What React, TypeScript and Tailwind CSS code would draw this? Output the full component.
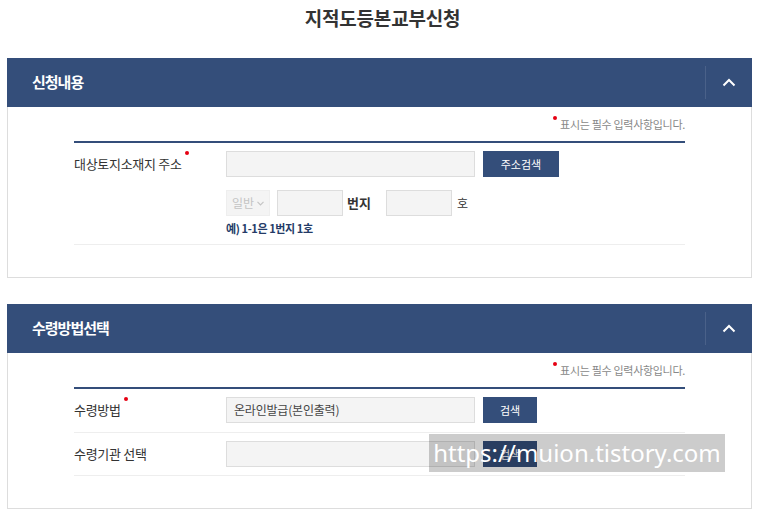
import React from "react";

const FONT = '"Noto Sans CJK KR", "Noto Sans", sans-serif';

function Chevron() {
  return (
    <svg width="14" height="9" viewBox="0 0 14 9" fill="none">
      <polyline points="1.5,7.5 7,2 12.5,7.5" stroke="#ffffff" strokeWidth="2" fill="none" />
    </svg>
  );
}

function Header({ title }: { title: string }) {
  return (
    <div className="flex h-[49px] items-center bg-[#344e7a]">
      <div className="flex-1 pl-[25px] text-[15px] font-bold tracking-[-1px] text-white">{title}</div>
      <div className="h-[33px] w-px bg-[#4a6189]" />
      <div className="flex w-[46px] items-center justify-center">
        <Chevron />
      </div>
    </div>
  );
}

function Note() {
  return (
    <div className="flex justify-end pt-[9px] pb-[9px] text-[11px] leading-[16px] tracking-[-0.3px] text-[#888]">
      <span className="relative">
        <span className="absolute -left-[7px] top-[0px] h-[4px] w-[4px] rounded-full bg-[#e60012]" />
        표시는 필수 입력사항입니다.
      </span>
    </div>
  );
}

function Label({ text, req }: { text: string; req?: boolean }) {
  return (
    <div className="w-[152px] shrink-0 text-[13px] tracking-[-0.3px] text-[#333]">
      <span className="relative">
        {text}
        {req && <span className="absolute -right-[7px] -top-[3px] h-[4px] w-[4px] rounded-full bg-[#e60012]" />}
      </span>
    </div>
  );
}

function Btn({ text, w }: { text: string; w: string }) {
  return (
    <div className={`flex h-[26px] items-center justify-center bg-[#344e7a] text-[11px] text-white ${w}`}>{text}</div>
  );
}

export default function App() {
  return (
    <div className="relative h-[513px] w-[765px] overflow-hidden bg-white" style={{ fontFamily: FONT }}>
      <div className="h-[58px] pt-[4px] text-center text-[19px] font-bold leading-[28px] tracking-[-0.2px] text-[#333]">
        지적도등본교부신청
      </div>

      {/* Section 1 */}
      <div className="ml-[7px] w-[745px]">
        <Header title="신청내용" />
        <div className="h-[171px] border border-t-0 border-[#dddddd] px-[66px]">
          <Note />
          <div className="border-t-2 border-[#344e7a]" />
          <div className="border-b border-[#eeeeee] pt-[8px] pb-[8px]">
            <div className="flex items-center">
              <Label text="대상토지소재지 주소" req />
              <div className="h-[26px] w-[249px] border border-[#dddddd] bg-[#f4f4f4]" />
              <div className="ml-[8px]">
                <Btn text="주소검색" w="w-[76px]" />
              </div>
            </div>
            <div className="mt-[13px] flex items-center pl-[152px]">
              <div className="flex h-[26px] w-[44px] items-center justify-center gap-[3px] border border-[#eeeeee] bg-[#f4f4f4] text-[12px] text-[#c4c4c4]">
                일반
                <svg width="7" height="5" viewBox="0 0 7 5" fill="none">
                  <polyline points="0.5,0.8 3.5,3.8 6.5,0.8" stroke="#c4c4c4" strokeWidth="1.2" />
                </svg>
              </div>
              <div className="ml-[7px] h-[26px] w-[66px] border border-[#dddddd] bg-[#f4f4f4]" />
              <div className="ml-[4px] w-[39px] text-[13px] font-semibold text-[#333]">번지</div>
              <div className="h-[26px] w-[66px] border border-[#dddddd] bg-[#f4f4f4]" />
              <div className="ml-[5px] text-[12px] text-[#333]">호</div>
            </div>
            <div className="mt-[4px] pl-[152px] text-[11px] font-bold leading-[16px] tracking-[-0.4px] text-[#243b67]">
              예) 1-1은 1번지 1호
            </div>
          </div>
        </div>
      </div>

      {/* Section 2 */}
      <div className="ml-[7px] mt-[26px] w-[745px]">
        <Header title="수령방법선택" />
        <div className="h-[156px] border border-t-0 border-[#dddddd] px-[66px]">
          <Note />
          <div className="border-t-2 border-[#344e7a]" />
          <div className="flex items-center border-b border-[#eeeeee] pt-[8px] pb-[9px]">
            <Label text="수령방법" req />
            <div className="flex h-[26px] w-[249px] items-center border border-[#dddddd] bg-[#f4f4f4] pl-[7px] text-[12px] tracking-[-0.2px] text-[#444]">
              온라인발급(본인출력)
            </div>
            <div className="ml-[8px]">
              <Btn text="검색" w="w-[54px]" />
            </div>
          </div>
          <div className="flex items-center border-b border-[#eeeeee] pt-[8px] pb-[8px]">
            <Label text="수령기관 선택" />
            <div className="h-[26px] w-[249px] border border-[#dddddd] bg-[#f4f4f4]" />
            <div className="ml-[8px]">
              <Btn text="검색" w="w-[54px]" />
            </div>
          </div>
        </div>
      </div>

      {/* Watermark */}
      <div
        className="absolute left-[429px] top-[434px] flex h-[38px] w-[296px] items-center justify-center bg-[rgba(0,0,0,0.2)] text-[24px] text-white"
        style={{ fontFamily: '"Noto Sans", sans-serif' }}
      >
        https://muion.tistory.com
      </div>
    </div>
  );
}
